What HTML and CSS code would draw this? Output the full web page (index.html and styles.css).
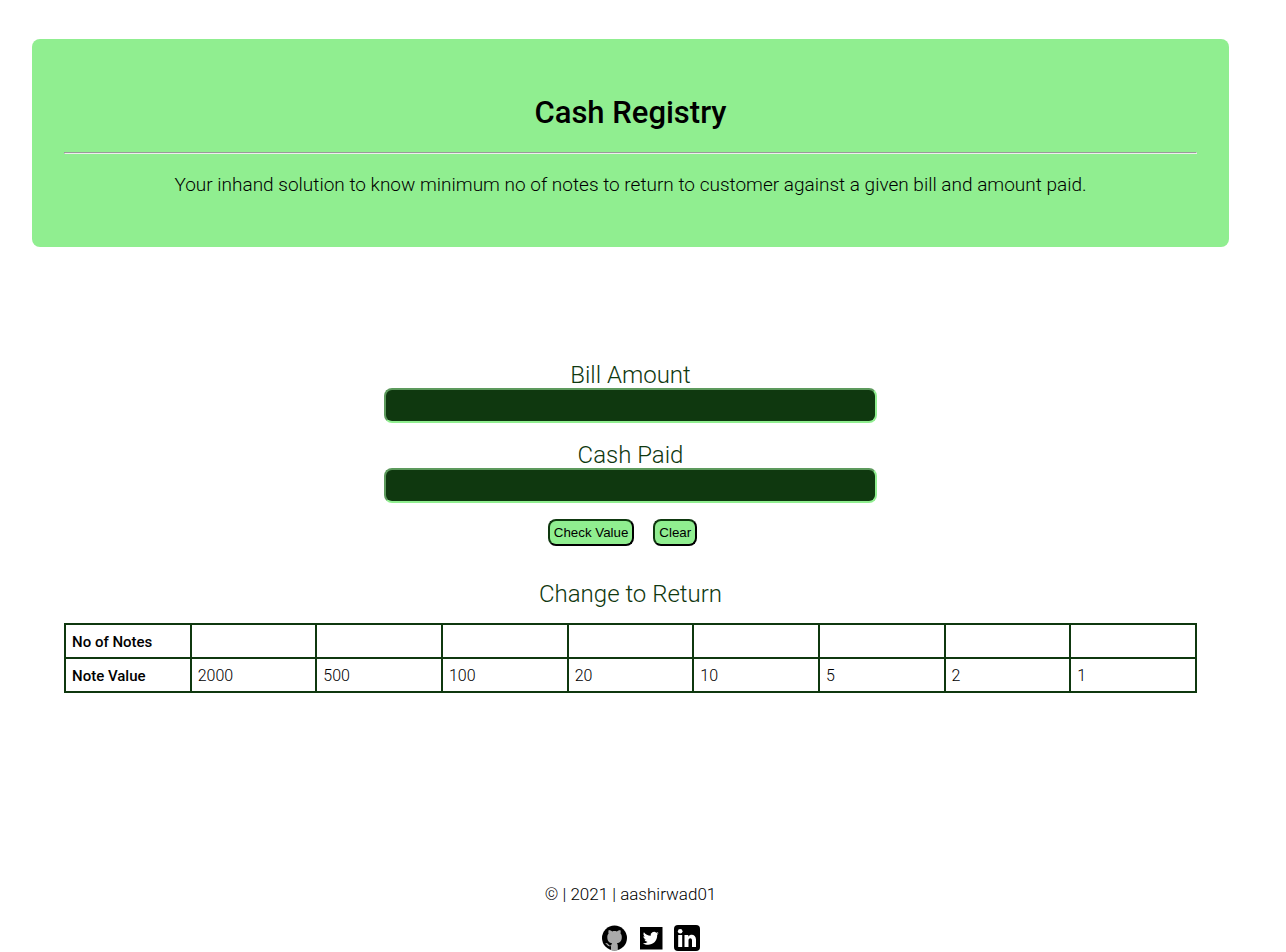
FILE: index.html
```html
<!DOCTYPE html>
<html lang="en">
<head>
<meta charset="utf-8">
<meta name="viewport" content="width=device-width, initial-scale=1">
<title>Cash Registry</title>
<link rel="stylesheet" href="styles.css">
</head>
<body>
<header class="hero">
  <h1 class="hero-title">Cash Registry</h1>
  <hr class="hero-rule">
  <p class="hero-text">Your inhand solution to know minimum no of notes to return to customer against a given bill and amount paid.</p>
</header>
<main class="main">
  <form class="form">
    <label class="label" for="bill">Bill Amount</label>
    <input class="field" id="bill" type="text">
    <label class="label" for="cash">Cash Paid</label>
    <input class="field" id="cash" type="text">
    <div class="actions">
      <button class="button" type="button">Check Value</button>
      <button class="button" type="reset">Clear</button>
    </div>
  </form>
  <table class="notes">
    <caption class="caption">Change to Return</caption>
    <tbody>
      <tr><th scope="row">No of Notes</th><td></td><td></td><td></td><td></td><td></td><td></td><td></td><td></td></tr>
      <tr><th scope="row">Note Value</th><td>2000</td><td>500</td><td>100</td><td>20</td><td>10</td><td>5</td><td>2</td><td>1</td></tr>
    </tbody>
  </table>
</main>
<footer class="footer">
  <p class="copyright">© | 2021 | aashirwad01</p>
  <nav class="social">
    <a href="#github" aria-label="GitHub"><svg class="icon" viewBox="0 0 26 26"><circle cx="12.500" cy="13" r="12.5"/><path fill="#aaa" d="M9 25v-4C5.500 22 5 19 3.300 18.200c1.200-.6 2.700.4 3.400 1.500.6 1 1.600 1 2.500.5.1-.9.500-1.500 1-1.900C7.200 17.800 5.300 16 5.300 12.200c0-1.600.5-2.700 1.300-3.600-.4-1.300-.2-2.700.2-3.700 1.400 0 2.600.8 3.500 1.500 1.500-.4 3-.4 4.500 0 1-.7 2.200-1.500 3.500-1.500.5 1.200.6 2.500.2 3.700.9.900 1.300 2.100 1.300 3.600 0 3.800-2 5.600-5 6.100.8.700 1 1.600 1 2.700v4c-2.300.8-4.600.8-6.800 0z"/></svg></a>
    <a href="#twitter" aria-label="Twitter"><svg class="icon" viewBox="0 0 26 26"><path d="M2 2h22.500v22.500H2z"/><path fill="#fff" d="M20.800 8.200c-.6.300-1.200.5-1.900.6.700-.4 1.200-1.100 1.400-1.800-.6.400-1.300.6-2 .8a3.300 3.300 0 0 0-5.600 3c-2.800-.1-5.200-1.400-6.800-3.500-.9 1.500-.4 3.400 1 4.400-.5 0-1-.2-1.500-.4 0 1.600 1.100 2.900 2.600 3.300-.5.100-1 .1-1.500 0 .4 1.300 1.600 2.300 3.100 2.300A6.600 6.600 0 0 1 4.900 18.300c5.500 3.600 14.600.7 14.300-8.500.6-.4 1.200-1 1.600-1.600z"/></svg></a>
    <a href="#linkedin" aria-label="LinkedIn"><svg class="icon" viewBox="0 0 26 26"><rect width="26" height="26" rx="4"/><circle cx="6.200" cy="6.200" r="2.300" fill="#fff"/><path fill="#fff" d="M4.200 10h4v12h-4zM10.500 10h3.800v1.700c2-3.200 7.700-2.500 7.700 2.900V22h-4v-6.500c0-3.200-3.500-2.900-3.500 0V22h-4z"/></svg></a>
  </nav>
</footer>
</body>
</html>
```
FILE: styles.css
```css
* { box-sizing: border-box; }
body {
  margin: 0;
  padding: 39px 57px 0 32px;
  background: #fff;
  color: #000;
  font-family: Roboto, sans-serif;
  font-weight: 300;
  font-size: 16px;
}
.hero {
  padding: 52px 32px 49px;
  border-radius: 8px;
  background: lightgreen;
  text-align: center;
}
.hero-title {
  margin: 0 0 18px;
  font-size: 31px;
  line-height: 43px;
  font-weight: 500;
}
.hero-rule { margin: 0; }
.hero-text {
  margin: 18px 0 0;
  font-size: 19px;
  line-height: 26px;
}
.main { padding: 112px 32px 0; }
.form {
  display: flex;
  flex-direction: column;
  align-items: center;
}
.label, .caption {
  color: #0f380f;
  font-size: 24px;
  line-height: 25px;
}
.label { margin-top: 4px; }
.field {
  width: 43.5%;
  height: 35px;
  margin-bottom: 16px;
  padding: 4px 8px;
  border: 2px inset lightgreen;
  border-radius: 8px;
  background: #0f380f;
  color: #fff;
}
.actions {
  display: flex;
  gap: 19px;
  padding-right: 16px;
}
.button {
  height: 27px;
  padding: 4px;
  border: 2px solid;
  border-color: #0f380f #000 #000 #0f380f;
  border-radius: 8px;
  background: lightgreen;
  color: #000;
  font-family: "Liberation Sans", sans-serif;
}
.notes {
  width: 100%;
  margin-top: 36px;
  border-collapse: collapse;
  table-layout: fixed;
}
.caption { padding-bottom: 16px; }
.notes th, .notes td {
  height: 34px;
  padding: 1px 6px 0;
  border: 2px solid #0f380f;
  text-align: left;
}
.notes th {
  font-size: 15px;
  font-weight: 500;
}
.footer {
  padding-top: 188px;
  text-align: center;
}
.copyright {
  margin: 0;
  font-size: 17px;
  line-height: 26px;
}
.social {
  display: flex;
  justify-content: center;
  gap: 10px;
  padding: 18px 0 0 40px;
}
.social a { display: block; height: 26px; }
.icon { display: block; width: 26px; height: 26px; }
```
